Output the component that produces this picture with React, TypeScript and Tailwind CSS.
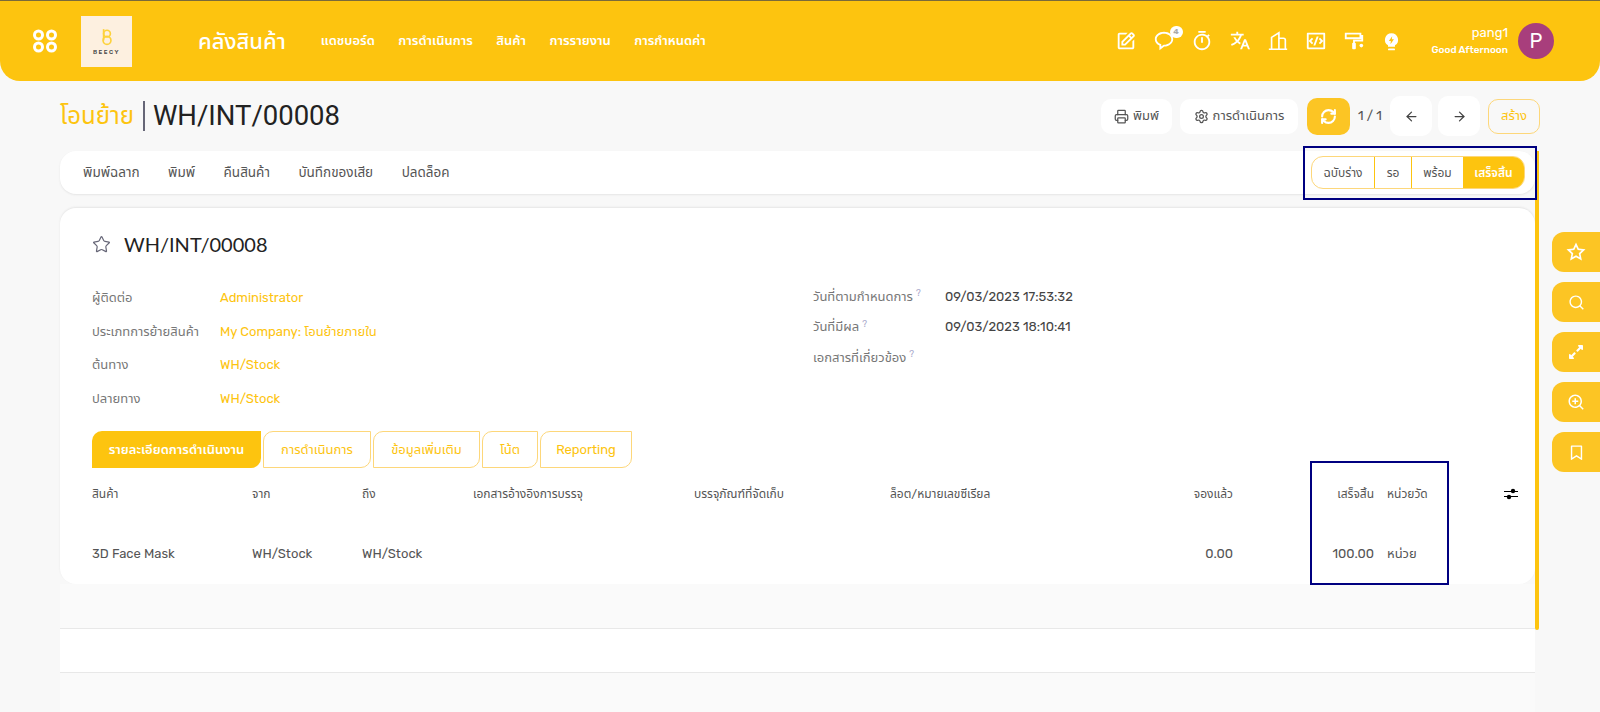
import { ArrowLeft, ArrowRight, Printer, RefreshCw, Settings, Star } from "lucide-react";
import { BiEdit, BiMessageRounded } from "react-icons/bi";
import { FaExpandAlt } from "react-icons/fa";
import {
  RiBookmarkLine,
  RiCodeBoxLine,
  RiSearchLine,
  RiStarLine,
  RiTimerLine,
  RiTranslate2,
  RiZoomInLine,
} from "react-icons/ri";

const NAV = ["แดชบอร์ด", "การดำเนินการ", "สินค้า", "การรายงาน", "การกำหนดค่า"];
const ACTIONS = ["พิมพ์ฉลาก", "พิมพ์", "คืนสินค้า", "บันทึกของเสีย", "ปลดล็อค"];
const FIELDS_LEFT = [
  ["ผู้ติดต่อ", "Administrator"],
  ["ประเภทการย้ายสินค้า", "My Company: โอนย้ายภายใน"],
  ["ต้นทาง", "WH/Stock"],
  ["ปลายทาง", "WH/Stock"],
];
const FIELDS_RIGHT = [
  ["วันที่ตามกำหนดการ", "09/03/2023 17:53:32"],
  ["วันที่มีผล", "09/03/2023 18:10:41"],
  ["เอกสารที่เกี่ยวข้อง", ""],
];
const TABS = [
  { label: "การดำเนินการ", w: "w-[108px]" },
  { label: "ข้อมูลเพิ่มเติม", w: "w-[107px]" },
  { label: "โน้ต", w: "w-[56px]" },
  { label: "Reporting", w: "w-[92px]" },
];
const SIDE = [
  { Icon: RiStarLine, size: "h-[20px] w-[20px]" },
  { Icon: RiSearchLine, size: "h-[17px] w-[17px]" },
  { Icon: FaExpandAlt, size: "h-[16px] w-[16px]" },
  { Icon: RiZoomInLine, size: "h-[18px] w-[18px]" },
  { Icon: RiBookmarkLine, size: "h-[17px] w-[17px]" },
];
const COLS = "grid grid-cols-[160px_110px_111px_221px_196px_200px_143px_141px_130px_14px]";

const Bulb = () => (
  <svg viewBox="0 0 24 24" className="h-[21px] w-[21px]">
    <path className="fill-white" d="M12 2.500a7.500 7.500 0 0 0-4 13.850V18h8v-1.650A7.500 7.500 0 0 0 12 2.500z" />
    <path className="fill-[#fdc40f]" d="M12.800 6 9 11.500h2.300L10.800 15l4-5.500h-2.400z" />
    <rect className="fill-white" x="8" y="20" width="8" height="2" rx="1" />
  </svg>
);

const Tower = () => (
  <svg viewBox="0 0 24 24" className="h-[22px] w-[22px] fill-none stroke-white stroke-[1.800]">
    <path d="M2 21h20M5 21V8l8-5v18M13 9h5a2 2 0 0 1 2 2v10" />
  </svg>
);

const Roller = () => (
  <svg viewBox="0 0 24 24" className="h-[22px] w-[22px]">
    <path className="fill-none stroke-white stroke-[2]" d="M3 4h16v5H3zM19 6.500h2v5h-9v3" />
    <rect className="fill-white" x="10" y="14" width="4" height="7" rx="1" />
    <circle className="fill-white" cx="20" cy="17" r="2" />
  </svg>
);

const Sliders = () => (
  <svg viewBox="0 0 14 12" className="h-[12px] w-[14px]">
    <path className="fill-none stroke-black stroke-[1]" d="M0 3.500h14M0 8.500h14" />
    <circle className="fill-black" cx="9" cy="3" r="2.200" />
    <circle className="fill-black" cx="5" cy="9" r="2.200" />
  </svg>
);

const GridLogo = () => (
  <svg viewBox="0 0 26 24" className="h-6 w-[26px] fill-none stroke-white stroke-[3]">
    <circle cx="6.500" cy="6" r="4" />
    <circle cx="19.500" cy="6" r="4" />
    <circle cx="6.500" cy="18" r="4" />
    <circle cx="19.500" cy="18" r="4" />
  </svg>
);

export default function App() {
  return (
    <div className="relative h-[712px] w-[1600px] overflow-hidden bg-[#f8f8f8] font-['Rubik','Roboto','Noto_Sans','Noto_Sans_Thai',sans-serif] text-[13px] text-[#555]">
      <header className="flex h-[81px] items-center rounded-b-[20px] border-t border-t-[#7a6a3a] bg-[#fdc40f] pl-[32px] pr-[46px] text-white">
        <GridLogo />
        <div className="ml-[23px] flex h-[51px] w-[51px] flex-col items-center justify-center bg-[#fdf0e0]">
          <svg viewBox="0 0 12 16" className="h-[18px] w-[14px] fill-none stroke-[#fdd23c] stroke-[1.500]">
            <path d="M3 1v10" />
            <circle cx="6" cy="5" r="3" />
            <circle cx="6" cy="11" r="3.500" />
          </svg>
          <span className="mt-[3px] text-[6px] font-medium leading-none tracking-[1.500px] text-[#444]">BEECY</span>
        </div>
        <div className="ml-[66px] text-[22px] font-medium">คลังสินค้า</div>
        <nav className="ml-[35px] flex gap-[23.500px] text-[13px] font-semibold">
          {NAV.map((n) => (
            <span key={n}>{n}</span>
          ))}
        </nav>
        <div className="ml-auto flex items-center gap-[16px]">
          <BiEdit className="h-[22px] w-[22px]" />
          <span className="relative">
            <BiMessageRounded className="h-[22px] w-[22px]" />
            <span className="absolute -right-[8px] -top-[4px] flex h-[12px] w-[13px] items-center justify-center rounded-full bg-white text-[8px] font-bold text-[#aaa]">
              4
            </span>
          </span>
          <RiTimerLine className="h-[22px] w-[22px]" />
          <RiTranslate2 className="h-[22px] w-[22px]" />
          <Tower />
          <RiCodeBoxLine className="h-[22px] w-[22px]" />
          <Roller />
          <Bulb />
        </div>
        <div className="ml-[30px] text-right">
          <div className="text-[13px] leading-[18px]">pang1</div>
          <div className="text-[10px] font-medium leading-[16px]">Good Afternoon</div>
        </div>
        <div className="ml-[10px] flex h-9 w-9 items-center justify-center rounded-full bg-[#a83e7c] text-[20px]">P</div>
      </header>

      <div className="ml-[60px] w-[1480px]">
        <div className="flex h-[70px] items-center">
          <span className="text-[24px] text-[#fdc40f]">โอนย้าย</span>
          <span className="ml-[9px] mr-[8px] h-[30px] w-[2px] bg-[#667]" />
          <span className="font-['Roboto'] text-[27.500px] text-[#222]">WH/INT/00008</span>
          <div className="ml-auto flex items-center">
            <button className="flex h-[35px] w-[71px] items-center justify-center gap-1 rounded-[10px] bg-white text-[#555]">
              <Printer className="h-[15px] w-[15px]" />
              พิมพ์
            </button>
            <button className="ml-[8px] flex h-[35px] w-[118px] items-center justify-center gap-1 rounded-[10px] bg-white text-[#555]">
              <Settings className="h-[15px] w-[15px]" />
              การดำเนินการ
            </button>
            <button className="ml-[9px] flex h-[37px] w-[43px] items-center justify-center rounded-[10px] bg-[#fcc524] text-white">
              <RefreshCw className="h-[17px] w-[17px]" strokeWidth={3} />
            </button>
            <span className="ml-[8px] w-[24px] text-[13px]">1 / 1</span>
            <button className="ml-[8px] flex h-10 w-[42px] items-center justify-center rounded-[10px] bg-white text-[#444]">
              <ArrowLeft className="h-[15px] w-[15px]" />
            </button>
            <button className="ml-[6px] flex h-10 w-[42px] items-center justify-center rounded-[10px] bg-white text-[#444]">
              <ArrowRight className="h-[15px] w-[15px]" />
            </button>
            <button className="ml-[8px] h-[35px] w-[52px] rounded-[10px] border border-[#fdd77a] text-[#fdc40f]">สร้าง</button>
          </div>
        </div>

        <div className="flex items-stretch">
          <div className="w-[1475px]">
            <div className="flex h-[43px] items-center justify-between rounded-[16px] bg-white pl-[23px] shadow-[0_1px_2px_#e5e5e5]">
              <div className="flex gap-[28.500px] text-[13.500px]">
                {ACTIONS.map((a) => (
                  <span key={a}>{a}</span>
                ))}
              </div>
            </div>

            <div className="mt-[14px] rounded-[16px] bg-white pt-[21px] shadow-[0_-1px_2px_#e5e5e5]">
              <div className="flex items-center pl-[32px]">
                <Star className="h-[19px] w-[19px] text-[#667]" strokeWidth={1.500} />
                <span className="ml-[13px] font-['Lato'] text-[20px] text-[#222]">WH/INT/00008</span>
              </div>
              <div className="mt-[22px] grid grid-cols-[721px_1fr] pl-[32px]">
                <div>
                  {FIELDS_LEFT.map(([k, v]) => (
                    <div key={k} className="flex h-[33.500px] items-center">
                      <span className="w-[128px] text-[#777]">{k}</span>
                      <span className="text-[#fdc40f]">{v}</span>
                    </div>
                  ))}
                </div>
                <div>
                  {FIELDS_RIGHT.map(([k, v]) => (
                    <div key={k} className="flex h-[30.500px] items-center">
                      <span className="w-[132px] text-[#777]">
                        {k}
                        <sup className="ml-[3px] text-[9px] text-[#aac]">?</sup>
                      </span>
                      <span className="text-[#444]">{v}</span>
                    </div>
                  ))}
                </div>
              </div>

              <div className="mt-[16px] flex pl-[32px]">
                <div className="flex h-[37px] w-[169px] items-center justify-center rounded-tl-[10px] rounded-br-[10px] bg-[#fdc40f] font-semibold text-white">
                  รายละเอียดการดำเนินงาน
                </div>
                <div className="ml-[2px] flex gap-[2px]">
                  {TABS.map((t) => (
                    <div
                      key={t.label}
                      className={`flex h-[37px] items-center justify-center rounded-tl-[10px] rounded-br-[10px] border border-[#fdd77a] text-[#fdc40f] ${t.w}`}
                    >
                      {t.label}
                    </div>
                  ))}
                </div>
              </div>

              <div className={`${COLS} mt-[17px] h-[18px] items-center pl-[32px] text-[12px]`}>
                <span>สินค้า</span>
                <span>จาก</span>
                <span>ถึง</span>
                <span>เอกสารอ้างอิงการบรรจุ</span>
                <span>บรรจุภัณฑ์ที่จัดเก็บ</span>
                <span>ล็อต/หมายเลขซีเรียล</span>
                <span className="text-right">จองแล้ว</span>
                <span className="text-right">เสร็จสิ้น</span>
                <span className="pl-[13px]">หน่วยวัด</span>
                <Sliders />
              </div>
              <div className={`${COLS} mt-[36px] h-[30px] items-center pl-[32px]`}>
                <span>3D Face Mask</span>
                <span>WH/Stock</span>
                <span>WH/Stock</span>
                <span />
                <span />
                <span />
                <span className="text-right">0.00</span>
                <span className="text-right">100.00</span>
                <span className="pl-[13px]">หน่วย</span>
              </div>
              <div className="h-[15px]" />
            </div>

            <div className="h-[45px] border-b border-b-[#e8e8e8] bg-[#fafafa]" />
            <div className="h-[44px] border-b border-b-[#e8e8e8] bg-white" />
            <div className="h-[40px] bg-[#fafafa]" />
          </div>
          <div className="h-[479px] w-[4px] rounded-b-[2px] bg-[#fdc40f]" />
        </div>
      </div>

      {/* annotation boxes over the page */}
      <div className="absolute left-[1303px] top-[146px] h-[54px] w-[234px] border-2 border-[#000080]" />
      <div className="absolute left-[1311px] top-[156px] flex h-[33px] w-[214px] overflow-hidden rounded-[12px] border border-[#fdd77a] text-[12px]">
        <div className="flex w-[63px] items-center justify-center border-r border-r-[#fdc40f]">ฉบับร่าง</div>
        <div className="flex w-[37px] items-center justify-center border-r border-r-[#fdc40f]">รอ</div>
        <div className="flex w-[51px] items-center justify-center">พร้อม</div>
        <div className="flex flex-1 items-center justify-center bg-[#fdc40f] font-semibold text-white">เสร็จสิ้น</div>
      </div>
      <div className="absolute left-[1310px] top-[461px] h-[124px] w-[139px] border-2 border-[#000080]" />

      <div className="absolute right-0 top-[232px] flex flex-col gap-[10px]">
        {SIDE.map(({ Icon, size }, i) => (
          <div key={i} className="flex h-10 w-[48px] items-center justify-center rounded-l-[12px] bg-[#fcc524] text-white">
            <Icon className={size} />
          </div>
        ))}
      </div>
    </div>
  );
}
